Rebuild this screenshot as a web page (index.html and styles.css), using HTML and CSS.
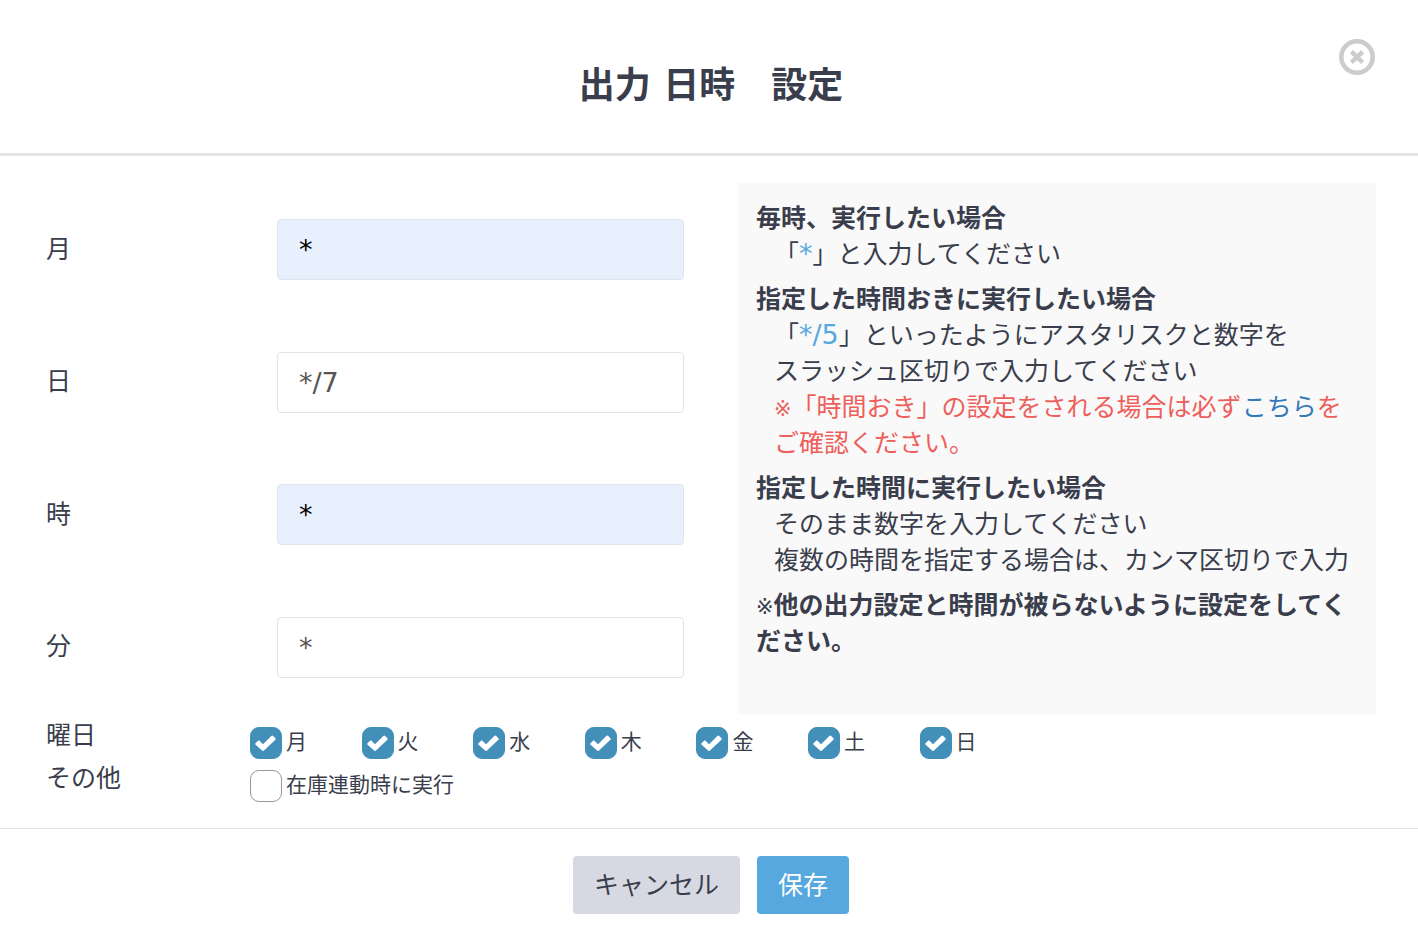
FILE: index.html
```html
<!DOCTYPE html>
<html lang="ja">
<head>
  <meta charset="UTF-8" />
  <meta name="viewport" content="width=device-width, initial-scale=1" />
  <title>出力 日時　設定</title>
  <link rel="stylesheet" href="styles.css">
</head>
<body>
  <svg class="defs" aria-hidden="true">
    <symbol id="check" viewBox="0 0 20 16">
      <path d="M1.8 8.8 L4 6.6 L7.8 10.4 L16 2.2 L18.2 4.4 L7.8 14.2 Z" fill="#fff" stroke="#fff" stroke-width="1.8" stroke-linejoin="round" />
    </symbol>
  </svg>

  <form class="modal" onsubmit="event.preventDefault();">
    <header class="modal-header">
      <h1>出力 日時　設定</h1>
      <button type="button" class="close-btn" aria-label="閉じる">
        <svg viewBox="0 0 36 36" width="36" height="36">
          <circle cx="18" cy="18" r="15.7" fill="none" stroke="#ccc" stroke-width="4.6" />
          <path d="M12.4 12.6 L23.6 23.4 M23.6 12.6 L12.4 23.4" stroke="#ccc" stroke-width="4.4" />
        </svg>
      </button>
    </header>

    <div class="modal-body">
      <div class="columns">
        <div class="fields">
          <div class="field">
            <label for="month">月</label>
            <input type="text" id="month" class="filled" value="*">
          </div>
          <div class="field">
            <label for="day">日</label>
            <input type="text" id="day" value="*/7">
          </div>
          <div class="field">
            <label for="hour">時</label>
            <input type="text" id="hour" class="filled" value="*">
          </div>
          <div class="field">
            <label for="minute">分</label>
            <input type="text" id="minute" value="*">
          </div>
        </div>

        <div class="help">
          <section>
            <h2>毎時、実行したい場合</h2>
            <p>「<span class="code">*</span>」と入力してください</p>
          </section>
          <section>
            <h2>指定した時間おきに実行したい場合</h2>
            <p>「<span class="code">*/5</span>」といったようにアスタリスクと数字を<br>スラッシュ区切りで入力してください</p>
            <p class="warn"><span class="mark">※</span>「時間おき」の設定をされる場合は必ず<a href="#">こちら</a>を<br>ご確認ください。</p>
          </section>
          <section>
            <h2>指定した時間に実行したい場合</h2>
            <p>そのまま数字を入力してください<br>複数の時間を指定する場合は、カンマ区切りで入力</p>
          </section>
          <section>
            <h2><span class="mark">※</span>他の出力設定と時間が被らないように設定をしてください。</h2>
          </section>
        </div>
      </div>

      <div class="option-row" role="group" aria-labelledby="weekLabel">
        <span class="option-label" id="weekLabel">曜日</span>
        <div class="days">
          <label class="check"><span class="box"><input type="checkbox" checked><svg><use href="#check" /></svg></span>月</label>
          <label class="check"><span class="box"><input type="checkbox" checked><svg><use href="#check" /></svg></span>火</label>
          <label class="check"><span class="box"><input type="checkbox" checked><svg><use href="#check" /></svg></span>水</label>
          <label class="check"><span class="box"><input type="checkbox" checked><svg><use href="#check" /></svg></span>木</label>
          <label class="check"><span class="box"><input type="checkbox" checked><svg><use href="#check" /></svg></span>金</label>
          <label class="check"><span class="box"><input type="checkbox" checked><svg><use href="#check" /></svg></span>土</label>
          <label class="check"><span class="box"><input type="checkbox" checked><svg><use href="#check" /></svg></span>日</label>
        </div>
      </div>
      <div class="option-row" role="group" aria-labelledby="otherLabel">
        <span class="option-label" id="otherLabel">その他</span>
        <label class="check"><span class="box"><input type="checkbox"><svg><use href="#check" /></svg></span>在庫連動時に実行</label>
      </div>
    </div>

    <footer class="modal-footer">
      <button type="button" class="btn">キャンセル</button>
      <button type="submit" class="btn btn-primary">保存</button>
    </footer>
  </form>
</body>
</html>
```
FILE: styles.css
```css
* { box-sizing: border-box; }
body { margin: 0; background: #fff; color: #3a3e4c; font-family: "DejaVu Sans", "Noto Sans CJK JP", sans-serif; font-size: 25px; line-height: 36px; }
h1, h2, p { margin: 0; }
input, button { font-family: inherit; font-size: inherit; }
.defs { position: absolute; width: 0; height: 0; }

/* header */
.modal-header { position: relative; padding: 59px 42px 40px 46px; border-bottom: 3px solid #e5e5e5; text-align: center; }
.modal-header h1 { font-size: 36px; line-height: 54px; font-weight: 700; }
.close-btn { position: absolute; top: 39px; right: 43px; padding: 0; border: none; background: none; cursor: pointer; }
.close-btn svg { display: block; }

/* body */
.modal-body { padding: 27px 42px 28px 46px; }
.columns { display: grid; grid-template-columns: 1fr 1fr; gap: 54px; }
.fields { display: flex; flex-direction: column; justify-content: space-between; padding: 36px 0; }
.field { display: flex; align-items: center; }
.field label { width: 231px; }
.field input { flex: 1; min-width: 0; height: 61px; padding: 0 21px; border: 1px solid #e2e4ea; border-radius: 4px; background: #fff; color: #555; font-size: 27px; }
.field input.filled { background: #e8f0fe; color: #000; }

.help { padding: 18px 18px 54px; background: #f9f9f9; }
.help section + section { margin-top: 9px; }
.help h2 { font-size: 25px; line-height: 36px; font-weight: 700; }
.help p { padding-left: 18px; white-space: nowrap; }
.code { color: #56a8de; font-size: 27px; line-height: 1; }
.mark { font-size: 21px; line-height: 1; font-weight: 400; }
.warn { color: #ee5f5b; }
.warn a { color: #337ab7; text-decoration: none; }

/* checkboxes */
.option-row { display: flex; align-items: flex-start; height: 43px; }
.option-label { width: 204px; padding-top: 4px; }
.days { flex: 1; display: grid; grid-template-columns: repeat(10, 1fr); margin-right: 10px; }
.check { display: flex; align-items: flex-start; gap: 4px; padding-top: 13px; font-size: 21px; line-height: 30px; white-space: nowrap; }
.box { position: relative; width: 32px; height: 32px; }
.box input { appearance: none; display: block; width: 32px; height: 32px; margin: 0; border: 1px solid #999; border-radius: 9px; background: #fff; }
.box input:checked { border-color: #428fba; background: #428fba; }
.box svg { display: none; position: absolute; left: 4px; top: 7px; width: 23px; height: 18px; pointer-events: none; }
.box input:checked + svg { display: block; }

/* footer */
.modal-footer { display: flex; justify-content: center; gap: 17px; padding: 27px 42px 18px 46px; border-top: 1px solid #e5e5e5; }
.btn { height: 58px; padding: 0 21px 4px; border: none; border-radius: 4px; background: #d6d9e1; color: #3a3e4c; cursor: pointer; }
.btn-primary { background: #56a8de; color: #fff; }
```
